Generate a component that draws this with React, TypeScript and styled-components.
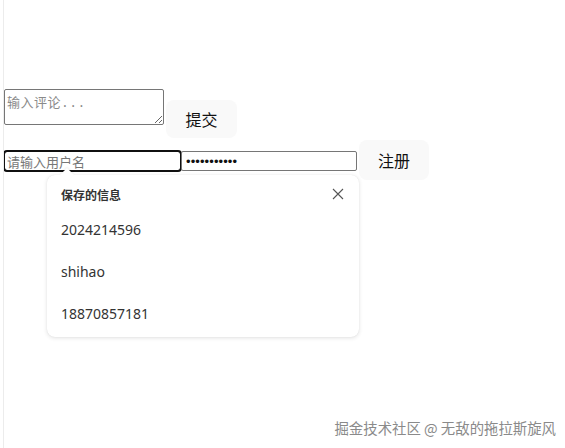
import React from "react";
import styled, { createGlobalStyle } from "styled-components";

const Global = createGlobalStyle`
  html, body { margin: 0; padding: 0; background: #fff; }
  body { font-family: "Microsoft YaHei", "Noto Sans CJK SC", "Noto Sans", sans-serif; }
`;

const Page = styled.div`
  position: relative;
  width: 565px;
  height: 448px;
  box-sizing: border-box;
  margin-left: 3px;
  border-left: 1px solid #ececec;
  overflow: hidden;
`;

const Row = styled.div<{ $top: number }>`
  display: flex;
  align-items: flex-start;
  margin-top: ${(p) => p.$top}px;
`;

const Comment = styled.textarea`
  box-sizing: border-box;
  width: 160px;
  height: 36px;
  margin: 0;
  padding: 2px 2px;
  border: 1px solid #767676;
  border-radius: 2px;
  font: 13px "Liberation Mono", "Noto Sans CJK SC", monospace;
  letter-spacing: 0.5px;
  color: #222;
  &::placeholder { color: #8a8a8a; }
`;

const ActionButton = styled.button<{ $top: number; $w: number; $h: number }>`
  box-sizing: border-box;
  margin: ${(p) => p.$top}px 0 0 2px;
  width: ${(p) => p.$w}px;
  height: ${(p) => p.$h}px;
  border: none;
  border-radius: 8px;
  background: #f9f9f9;
  color: #111;
  font: 16px "Noto Sans CJK SC", sans-serif;
  cursor: pointer;
`;

const Field = styled.div`
  position: relative;
  display: flex;
  margin-top: 11px;
`;

const TextInput = styled.input<{ $w: number; $focused?: boolean }>`
  box-sizing: border-box;
  width: ${(p) => p.$w}px;
  height: 20px;
  margin: 0;
  padding: 1px 2px;
  border: 1px solid #767676;
  border-radius: 2px;
  font: 13px "Noto Sans CJK SC", "Liberation Sans", sans-serif;
  color: #111;
  outline: ${(p) => (p.$focused ? "2px solid #101010" : "none")};
  outline-offset: -1px;
  ${(p) => p.$focused && "border-radius: 3px;"}
  &[type="password"] {
    font-family: "Liberation Sans", sans-serif;
    padding-left: 4px;
    letter-spacing: 0.1px;
  }
  &::placeholder { color: #777; }
`;

const Popover = styled.div`
  position: absolute;
  left: 43px;
  top: 24px;
  width: 312px;
  box-sizing: border-box;
  padding: 9px 14px 3px 14px;
  background: #fff;
  border-radius: 8px;
  box-shadow: 0 1px 4px rgba(0, 0, 0, 0.12), 0 0 1px rgba(0, 0, 0, 0.1);
  z-index: 2;
  &::before {
    content: "";
    position: absolute;
    left: 15px;
    top: -5px;
    width: 10px;
    height: 10px;
    background: #fff;
    transform: rotate(45deg);
    box-shadow: -1px -1px 2px rgba(0, 0, 0, 0.06);
  }
`;

const PopHeader = styled.div`
  display: flex;
  align-items: center;
  justify-content: space-between;
  height: 20px;
`;

const PopTitle = styled.span`
  font: bold 12px "Noto Sans CJK SC", sans-serif;
  color: #333;
`;

const CloseIcon = styled.svg`
  width: 12px;
  height: 12px;
  margin-right: 1px;
`;

const Item = styled.div`
  height: 42px;
  display: flex;
  align-items: center;
  font: 14px "Noto Sans", "Noto Sans CJK SC", sans-serif;
  color: #333;
`;

const ItemList = styled.div`
  margin-top: 4px;
`;

const Watermark = styled.div`
  position: absolute;
  right: 12px;
  bottom: 10px;
  font: 14.4px "Noto Sans CJK SC", sans-serif;
  color: #8a8a8a;
  text-shadow: 0 0 1px rgba(255, 255, 255, 0.8);
`;

const saved = ["2024214596", "shihao", "18870857181"];

export default function App() {
  return (
    <>
      <Global />
      <Page>
        <Row $top={89}>
          <Comment placeholder="输入评论..." />
          <ActionButton $top={11} $w={71} $h={38}>提交</ActionButton>
        </Row>
        <Row $top={2}>
          <Field>
            <TextInput $w={177} $focused placeholder="请输入用户名" />
            <TextInput $w={176} type="password" defaultValue="12345678901" />
            <Popover>
              <PopHeader>
                <PopTitle>保存的信息</PopTitle>
                <CloseIcon viewBox="0 0 12 12" fill="none" stroke="#555" strokeWidth="1.1">
                  <path d="M1 1L11 11M11 1L1 11" />
                </CloseIcon>
              </PopHeader>
              <ItemList>
                {saved.map((s) => (
                  <Item key={s}>{s}</Item>
                ))}
              </ItemList>
            </Popover>
          </Field>
          <ActionButton $top={0} $w={70} $h={40}>注册</ActionButton>
        </Row>
        <Watermark>掘金技术社区 @ 无敌的拖拉斯旋风</Watermark>
      </Page>
    </>
  );
}
